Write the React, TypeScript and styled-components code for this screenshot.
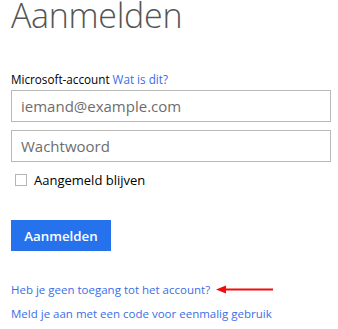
import React from 'react';
import styled, { createGlobalStyle } from 'styled-components';

const GlobalStyle = createGlobalStyle`
  body {
    margin: 0;
    background: #ffffff;
    font-family: "Open Sans", "Liberation Sans", sans-serif;
  }
`;

const Page = styled.div`
  width: 338px;
  height: 329px;
  padding: 0 7px 0 11px;
  box-sizing: border-box;
  overflow: hidden;
`;

const Title = styled.h1`
  margin: -5px 0 0 0;
  font-size: 34px;
  font-weight: 300;
  color: #555555;
  line-height: 40px;
  letter-spacing: -0.3px;
`;

const Form = styled.form`
  display: flex;
  flex-direction: column;
  margin-top: 36px;
`;

const Label = styled.div`
  font-size: 11.7px;
  color: #000000;
  line-height: 16px;
  margin-bottom: 3px;
`;

const Link = styled.a`
  color: #3a6ee8;
  text-decoration: none;
  cursor: pointer;
`;

const Input = styled.input`
  width: 320px;
  height: 32px;
  box-sizing: border-box;
  border: 1px solid #b9b9b9;
  padding: 0 9px;
  font-family: inherit;
  font-size: 15px;
  color: #333;
  margin: 0 0 8px 0;
  outline: none;
  &::placeholder {
    color: #6d6d6d;
  }
`;

const CheckRow = styled.label`
  display: flex;
  align-items: center;
  gap: 7px;
  margin: 1px 0 0 4px;
  font-size: 13px;
  color: #000;
  line-height: 18px;
`;

const Box = styled.span`
  width: 12px;
  height: 12px;
  box-sizing: border-box;
  border: 1px solid #b5b5b5;
  background: #fff;
`;

const Button = styled.button`
  margin-top: 31px;
  width: 100px;
  height: 31px;
  border: none;
  background: #2672ec;
  color: #ffffff;
  font-family: inherit;
  font-size: 13.3px;
  font-weight: 600;
  align-self: flex-start;
  padding: 0;
  cursor: pointer;
`;

const Links = styled.div`
  display: flex;
  flex-direction: column;
  gap: 6.5px;
  margin-top: 30px;
  font-size: 11.5px;
  line-height: 17px;
`;

const LinkRow = styled.div`
  display: flex;
  align-items: center;
  gap: 6px;
`;

const Arrow = () => (
  <svg width="57" height="9" viewBox="0 0 57 9">
    <line x1="8" y1="4.5" x2="57" y2="4.5" stroke="#f20d0d" strokeWidth="2" />
    <polygon points="0,4.5 10,0.5 10,8.5" fill="#f20d0d" />
  </svg>
);

export default function App() {
  return (
    <Page>
      <GlobalStyle />
      <Title>Aanmelden</Title>
      <Form onSubmit={e => e.preventDefault()}>
        <Label>
          Microsoft-account <Link>Wat is dit?</Link>
        </Label>
        <Input type="email" placeholder="iemand@example.com" />
        <Input type="password" placeholder="Wachtwoord" />
        <CheckRow>
          <Box />
          Aangemeld blijven
        </CheckRow>
        <Button type="submit">Aanmelden</Button>
      </Form>
      <Links>
        <LinkRow>
          <Link>Heb je geen toegang tot het account?</Link>
          <Arrow />
        </LinkRow>
        <LinkRow>
          <Link>Meld je aan met een code voor eenmalig gebruik</Link>
        </LinkRow>
      </Links>
    </Page>
  );
}
